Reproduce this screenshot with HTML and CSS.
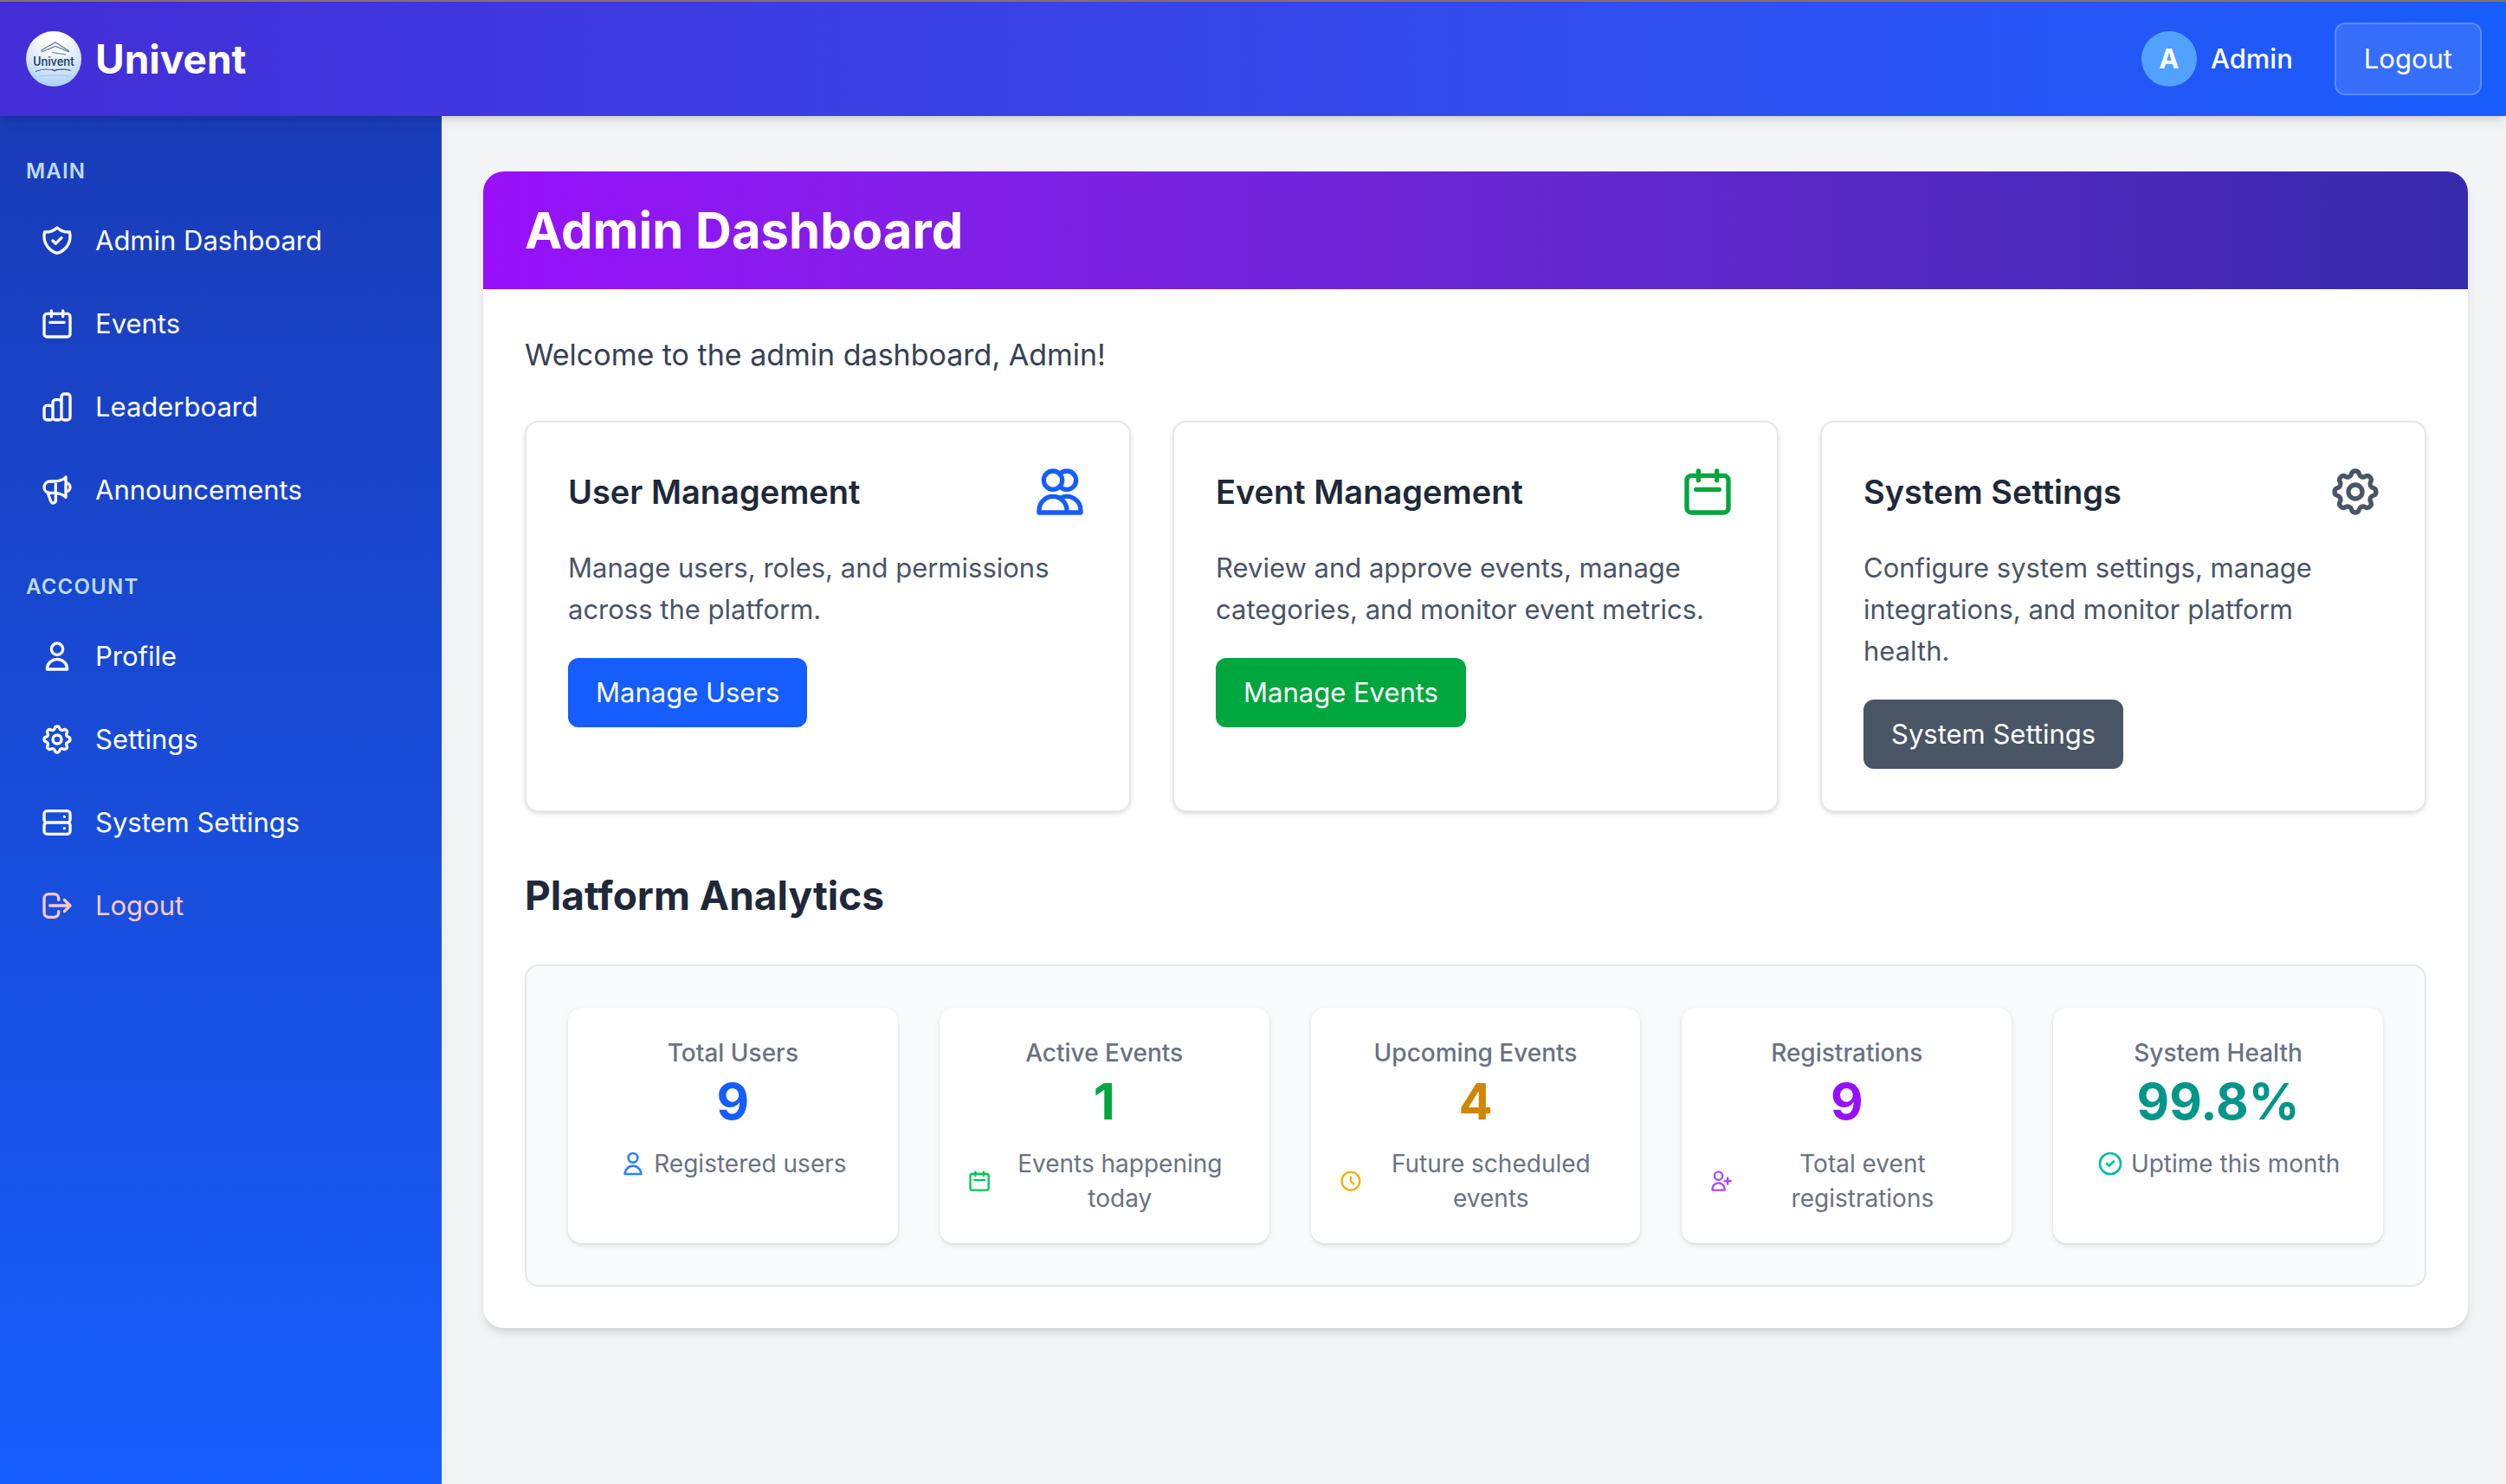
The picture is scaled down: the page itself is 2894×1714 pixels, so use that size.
FILE: index.html
```html
<!DOCTYPE html>
<html lang="en">
<head>
<meta charset="utf-8">
<meta name="viewport" content="width=device-width, initial-scale=1">
<title>Admin Dashboard - Univent</title>
<link rel="stylesheet" href="styles.css">
</head>
<body>
<svg class="sprite" aria-hidden="true">
  <symbol id="i-shield" viewBox="0 0 24 24"><path d="M9 12l2 2 4-4m5.618-4.016A11.955 11.955 0 0112 2.944a11.955 11.955 0 01-8.618 3.04A12.02 12.02 0 003 9c0 5.591 3.824 10.29 9 11.622 5.176-1.332 9-6.03 9-11.622 0-1.042-.133-2.052-.382-3.016z"/></symbol>
  <symbol id="i-calendar" viewBox="0 0 24 24"><path d="M8 7V3m8 4V3m-9 8h10M5 21h14a2 2 0 002-2V7a2 2 0 00-2-2H5a2 2 0 00-2 2v12a2 2 0 002 2z"/></symbol>
  <symbol id="i-chart" viewBox="0 0 24 24"><path d="M9 19v-6a2 2 0 00-2-2H5a2 2 0 00-2 2v6a2 2 0 002 2h2a2 2 0 002-2zm0 0V9a2 2 0 012-2h2a2 2 0 012 2v10m-6 0a2 2 0 002 2h2a2 2 0 002-2m0 0V5a2 2 0 012-2h2a2 2 0 012 2v14a2 2 0 01-2 2h-2a2 2 0 01-2-2z"/></symbol>
  <symbol id="i-megaphone" viewBox="0 0 24 24"><path d="M11 5.882V19.24a1.76 1.76 0 01-3.417.592l-2.147-6.15M18 13a3 3 0 100-6M5.436 13.683A4.001 4.001 0 017 6h1.832c4.1 0 7.625-1.234 9.168-3v14c-1.543-1.766-5.067-3-9.168-3H7a3.988 3.988 0 01-1.564-.317z"/></symbol>
  <symbol id="i-user" viewBox="0 0 24 24"><path d="M16 7a4 4 0 11-8 0 4 4 0 018 0zM12 14a7 7 0 00-7 7h14a7 7 0 00-7-7z"/></symbol>
  <symbol id="i-cog" viewBox="0 0 24 24"><path d="M10.325 4.317c.426-1.756 2.924-1.756 3.35 0a1.724 1.724 0 002.573 1.066c1.543-.94 3.31.826 2.37 2.37a1.724 1.724 0 001.065 2.572c1.756.426 1.756 2.924 0 3.35a1.724 1.724 0 00-1.066 2.573c.94 1.543-.826 3.31-2.37 2.37a1.724 1.724 0 00-2.572 1.065c-.426 1.756-2.924 1.756-3.35 0a1.724 1.724 0 00-2.573-1.066c-1.543.94-3.31-.826-2.37-2.37a1.724 1.724 0 00-1.065-2.572c-1.756-.426-1.756-2.924 0-3.35a1.724 1.724 0 001.066-2.573c-.94-1.543.826-3.31 2.37-2.37.996.608 2.296.07 2.572-1.065z"/><path d="M15 12a3 3 0 11-6 0 3 3 0 016 0z"/></symbol>
  <symbol id="i-server" viewBox="0 0 24 24"><path d="M5 12h14M5 12a2 2 0 01-2-2V6a2 2 0 012-2h14a2 2 0 012 2v4a2 2 0 01-2 2M5 12a2 2 0 00-2 2v4a2 2 0 002 2h14a2 2 0 002-2v-4a2 2 0 00-2-2m-2-4h.01M17 16h.01"/></symbol>
  <symbol id="i-logout" viewBox="0 0 24 24"><path d="M17 16l4-4m0 0l-4-4m4 4H7m6 4v1a3 3 0 01-3 3H6a3 3 0 01-3-3V7a3 3 0 013-3h4a3 3 0 013 3v1"/></symbol>
  <symbol id="i-users" viewBox="0 0 24 24"><path d="M12 4.354a4 4 0 110 5.292M15 21H3v-1a6 6 0 0112 0v1zm0 0h6v-1a6 6 0 00-9-5.197M13 7a4 4 0 11-8 0 4 4 0 018 0z"/></symbol>
  <symbol id="i-user-add" viewBox="0 0 24 24"><path d="M18 9v3m0 0v3m0-3h3m-3 0h-3m-2-5a4 4 0 11-8 0 4 4 0 018 0zM3 20a6 6 0 0112 0v1H3v-1z"/></symbol>
  <symbol id="i-clock" viewBox="0 0 24 24"><path d="M12 8v4l3 3m6-3a9 9 0 11-18 0 9 9 0 0118 0z"/></symbol>
  <symbol id="i-check" viewBox="0 0 24 24"><path d="M9 12l2 2 4-4m6 2a9 9 0 11-18 0 9 9 0 0118 0z"/></symbol>
</svg>

<header class="topbar">
  <a class="brand" href="#">
    <svg class="logo" viewBox="0 0 64 64" aria-hidden="true">
      <defs>
        <radialGradient id="logo-bg" cx="50%" cy="12%" r="90%">
          <stop offset="0.2" stop-color="#ffffff"/>
          <stop offset="0.65" stop-color="#d6e6f8"/>
          <stop offset="1" stop-color="#a5d0f6"/>
        </radialGradient>
      </defs>
      <circle cx="32" cy="32" r="32" fill="url(#logo-bg)"/>
      <g fill="none" stroke="#5d7890" stroke-width="1.2">
        <path d="M17 22.500L34 13L50 23"/>
        <path d="M18 24L34 17.500L50 24"/>
        <path d="M30 24.500l16 2.500"/>
        <path d="M11 46.500c8-3 16-3 22-1 6-2 12-2 19 0" stroke="#3d5c80"/>
        <path d="M30 44l3 2 3-2" stroke="#3d5c80"/>
        <path d="M16 52q17-2 34 0" stroke="#a9c4e6"/>
      </g>
      <text class="logo-text" x="32" y="40" text-anchor="middle">Univent</text>
    </svg>
    <span class="brand-name">Univent</span>
  </a>
  <div class="account">
    <div class="who">
      <span class="avatar">A</span>
      <span class="who-name">Admin</span>
    </div>
    <button class="logout-btn" type="button">Logout</button>
  </div>
</header>

<div class="shell">
  <nav class="sidebar">
    <section class="nav-group">
      <h2 class="nav-title">Main</h2>
      <a class="nav-link" href="#"><svg class="icon"><use href="#i-shield"/></svg>Admin Dashboard</a>
      <a class="nav-link" href="#"><svg class="icon"><use href="#i-calendar"/></svg>Events</a>
      <a class="nav-link" href="#"><svg class="icon"><use href="#i-chart"/></svg>Leaderboard</a>
      <a class="nav-link" href="#"><svg class="icon"><use href="#i-megaphone"/></svg>Announcements</a>
    </section>
    <section class="nav-group">
      <h2 class="nav-title">Account</h2>
      <a class="nav-link" href="#"><svg class="icon"><use href="#i-user"/></svg>Profile</a>
      <a class="nav-link" href="#"><svg class="icon"><use href="#i-cog"/></svg>Settings</a>
      <a class="nav-link" href="#"><svg class="icon"><use href="#i-server"/></svg>System Settings</a>
      <a class="nav-link nav-link-danger" href="#"><svg class="icon"><use href="#i-logout"/></svg>Logout</a>
    </section>
  </nav>

  <main class="content">
    <div class="board">
      <div class="board-head"><h1 class="board-title">Admin Dashboard</h1></div>
      <div class="board-body">
        <p class="welcome">Welcome to the admin dashboard, Admin!</p>

        <div class="tools">
          <article class="tool">
            <div class="tool-head"><h3 class="tool-title">User Management</h3><svg class="icon icon-lg blue"><use href="#i-users"/></svg></div>
            <p class="tool-text">Manage users, roles, and permissions across the platform.</p>
            <a class="btn btn-blue" href="#">Manage Users</a>
          </article>
          <article class="tool">
            <div class="tool-head"><h3 class="tool-title">Event Management</h3><svg class="icon icon-lg green"><use href="#i-calendar"/></svg></div>
            <p class="tool-text">Review and approve events, manage categories, and monitor event metrics.</p>
            <a class="btn btn-green" href="#">Manage Events</a>
          </article>
          <article class="tool">
            <div class="tool-head"><h3 class="tool-title">System Settings</h3><svg class="icon icon-lg slate"><use href="#i-cog"/></svg></div>
            <p class="tool-text">Configure system settings, manage integrations, and monitor platform health.</p>
            <a class="btn btn-slate" href="#">System Settings</a>
          </article>
        </div>

        <h2 class="section-title">Platform Analytics</h2>
        <div class="stats">
          <div class="stat">
            <h3 class="stat-label">Total Users</h3>
            <p class="stat-value blue">9</p>
            <p class="stat-note"><svg class="icon icon-sm blue-soft"><use href="#i-user"/></svg><span>Registered users</span></p>
          </div>
          <div class="stat">
            <h3 class="stat-label">Active Events</h3>
            <p class="stat-value green">1</p>
            <p class="stat-note"><svg class="icon icon-sm green-soft"><use href="#i-calendar"/></svg><span>Events happening today</span></p>
          </div>
          <div class="stat">
            <h3 class="stat-label">Upcoming Events</h3>
            <p class="stat-value amber">4</p>
            <p class="stat-note"><svg class="icon icon-sm amber-soft"><use href="#i-clock"/></svg><span>Future scheduled events</span></p>
          </div>
          <div class="stat">
            <h3 class="stat-label">Registrations</h3>
            <p class="stat-value purple">9</p>
            <p class="stat-note"><svg class="icon icon-sm purple-soft"><use href="#i-user-add"/></svg><span>Total event registrations</span></p>
          </div>
          <div class="stat">
            <h3 class="stat-label">System Health</h3>
            <p class="stat-value teal">99.8%</p>
            <p class="stat-note"><svg class="icon icon-sm teal-soft"><use href="#i-check"/></svg><span>Uptime this month</span></p>
          </div>
        </div>
      </div>
    </div>
  </main>
</div>
</body>
</html>
```

FILE: styles.css
```css
*, *::before, *::after { box-sizing: border-box; }

body {
  margin: 0;
  min-height: 100vh;
  display: flex;
  flex-direction: column;
  background: #f3f4f6;
  color: #1e2939;
  font-family: Inter, "Liberation Sans", sans-serif;
  font-size: 31px;
  line-height: 48px;
}

h1, h2, h3, p { margin: 0; }
a { color: inherit; text-decoration: none; }

.sprite { position: absolute; width: 0; height: 0; }

.icon {
  width: 40px;
  height: 40px;
  flex-shrink: 0;
  fill: none;
  stroke: currentColor;
  stroke-width: 2;
  stroke-linecap: round;
  stroke-linejoin: round;
}
.icon-lg { width: 64px; height: 64px; }
.icon-sm { width: 32px; height: 32px; flex-shrink: 1; }

/* Top bar */
.topbar {
  position: relative;
  z-index: 2;
  display: flex;
  align-items: center;
  justify-content: space-between;
  padding: 24px 28px 24px 30px;
  border-top: 2px solid #85706b;
  background: linear-gradient(to right in oklab, #432dd7, #155dfc) padding-box;
  color: #fff;
  box-shadow: 0 8px 12px -2px rgba(0, 0, 0, .1), 0 4px 8px -4px rgba(0, 0, 0, .1);
}
.brand, .who { display: flex; align-items: center; gap: 16px; }
.logo { width: 64px; height: 64px; }
.logo-text { font: 500 14px Roboto, sans-serif; fill: #24466f; }
.brand-name { font-size: 46px; line-height: 64px; font-weight: 700; }
.account { display: flex; align-items: center; gap: 48px; }
.avatar {
  display: flex;
  align-items: center;
  justify-content: center;
  width: 64px;
  height: 64px;
  border-radius: 50%;
  background: #51a2ff;
  font-weight: 700;
}
.who-name { font-weight: 500; }
.logout-btn {
  padding: 16px 32px;
  border: 2px solid rgba(255, 255, 255, .2);
  border-radius: 12px;
  background: rgba(255, 255, 255, .12);
  color: #fff;
  font: inherit;
}

/* Sidebar */
.shell { display: flex; flex: 1; }
.sidebar {
  width: 510px;
  flex-shrink: 0;
  display: flex;
  flex-direction: column;
  gap: 56px;
  padding: 48px 30px;
  background: linear-gradient(to bottom in oklab, #193cb8, #155dfc);
  color: #fff;
  box-shadow: 0 8px 12px -2px rgba(0, 0, 0, .1);
}
.nav-group { display: flex; flex-direction: column; gap: 16px; }
.nav-title {
  padding-bottom: 8px;
  color: #bedbff;
  font-size: 24px;
  line-height: 32px;
  font-weight: 600;
  letter-spacing: 0.05em;
  text-transform: uppercase;
}
.nav-link { display: flex; align-items: center; gap: 24px; padding: 16px; }
.nav-link-danger { color: #ffc9c9; }

/* Main board */
.content { flex: 1; min-width: 0; padding: 64px 44px 64px 48px; }
.board {
  overflow: hidden;
  border-radius: 24px;
  background: #fff;
  box-shadow: 0 8px 12px -2px rgba(0, 0, 0, .1), 0 4px 8px -4px rgba(0, 0, 0, .1);
}
.board-head {
  padding: 32px 48px;
  background: linear-gradient(to right in oklab, #9810fa, #372aac);
  color: #fff;
}
.board-title { font-size: 58px; line-height: 72px; font-weight: 700; }
.board-body { padding: 48px; }
.welcome { color: #364153; font-size: 34px; line-height: 56px; }

.tools {
  display: grid;
  grid-template-columns: repeat(3, minmax(0, 1fr));
  gap: 48px;
  margin-top: 48px;
}
.tool {
  padding: 48px;
  border: 2px solid #e5e7eb;
  border-radius: 16px;
  box-shadow: 0 2px 6px rgba(0, 0, 0, .1), 0 2px 4px -2px rgba(0, 0, 0, .1);
}
.tool-head { display: flex; align-items: center; justify-content: space-between; }
.tool-title { font-size: 38px; line-height: 56px; font-weight: 600; }
.tool-text { margin: 32px 0; color: #4a5565; }
.btn {
  display: inline-block;
  vertical-align: top;
  padding: 16px 32px;
  border-radius: 12px;
  color: #fff;
}
.btn-blue { background: #155dfc; }
.btn-green { background: #00a63e; }
.btn-slate { background: #4a5565; }

.section-title { margin: 64px 0 48px; font-size: 46px; line-height: 64px; font-weight: 700; }
.stats {
  display: grid;
  grid-template-columns: repeat(5, minmax(0, 1fr));
  gap: 48px;
  padding: 48px;
  border: 2px solid #e5e7eb;
  border-radius: 16px;
  background: #f9fafb;
}
.stat {
  padding: 32px;
  border-radius: 16px;
  background: #fff;
  text-align: center;
  box-shadow: 0 2px 6px rgba(0, 0, 0, .1), 0 2px 4px -2px rgba(0, 0, 0, .1);
}
.stat-label { color: #6a7282; font-size: 28px; line-height: 40px; font-weight: 500; }
.stat-value { font-size: 58px; line-height: 72px; font-weight: 700; }
.stat-note {
  display: flex;
  align-items: center;
  justify-content: center;
  gap: 8px;
  margin-top: 16px;
  color: #6a7282;
  font-size: 28px;
  line-height: 40px;
}

.blue { color: #155dfc; }
.green { color: #00a63e; }
.slate { color: #4a5565; }
.amber { color: #d08700; }
.purple { color: #9810fa; }
.teal { color: #009689; }
.blue-soft { color: #2b7fff; }
.green-soft { color: #00c950; }
.amber-soft { color: #f0b100; }
.purple-soft { color: #ad46ff; }
.teal-soft { color: #00bba7; }
```
